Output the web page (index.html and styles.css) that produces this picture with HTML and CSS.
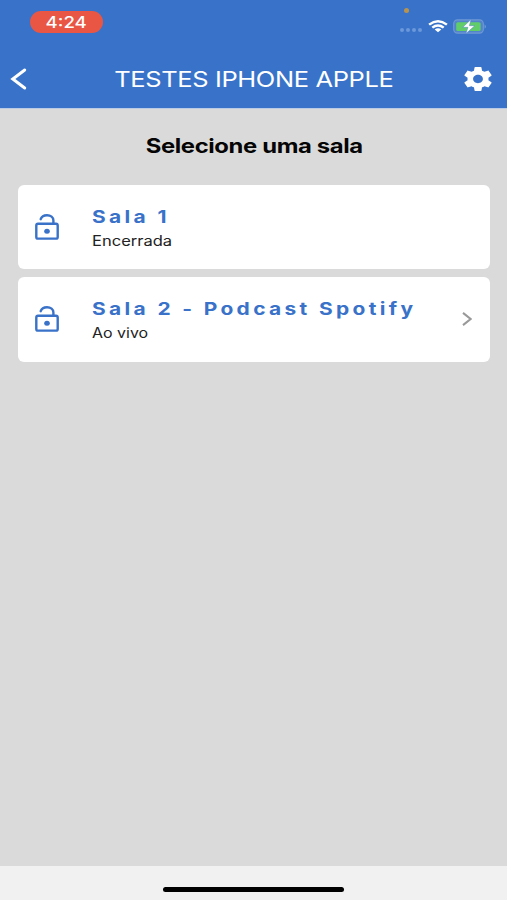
FILE: index.html
```html
<!DOCTYPE html>
<html lang="pt-BR">
<head>
<meta charset="utf-8">
<title>Selecione uma sala</title>
<link rel="stylesheet" href="styles.css">
</head>
<body>
<div class="screen">
  <header class="header">
    <div class="status">
      <div class="time"><span class="wide time-text">4:24</span></div>
      <div class="indicators">
        <i class="privacy-dot"></i>
        <div class="signal"><i></i><i></i><i></i><i></i></div>
        <svg class="wifi" viewBox="0 0 20 14" preserveAspectRatio="none" fill="none" stroke="#fff" stroke-width="2.5"><path d="M1.1 5Q10-2.2 18.9 5M4.3 8.2Q10 3.6 15.7 8.2"/><path d="M6.7 10.1Q10 7.6 13.3 10.1L10 13.2Z" fill="#fff" stroke="none"/></svg>
        <svg class="battery" viewBox="0 0 34 15"><rect x=".7" y=".9" width="29.6" height="13.2" rx="3.8" fill="#5284ca" stroke="#7099d5" stroke-width="1.1"/><rect x="3.2" y="3.2" width="24.4" height="8.8" rx="1.6" fill="#60cd68"/><path d="M31.7 5.2q2 2.3 0 4.6z" fill="#82a9df"/><path d="M18 .5 9.7 8.3h5.2L13 14.6 21.8 6.7h-5.4z" fill="#fff" stroke="#4c82c8" stroke-width=".5"/></svg>
      </div>
    </div>
    <nav class="nav">
      <svg class="back" viewBox="0 0 18 24" fill="none" stroke="#fff" stroke-width="3" stroke-linecap="round" stroke-linejoin="miter"><path d="M14.7 3 2.8 12l11.9 9"/></svg>
      <h1 class="wide title">TESTES IPHONE APPLE</h1>
      <svg class="gear" viewBox="2 2 20 20" preserveAspectRatio="none" fill="#fff"><path d="M19.43 12.98c.04-.32.07-.64.07-.98s-.03-.66-.07-.98l2.11-1.65c.19-.15.24-.42.12-.64l-2-3.46c-.12-.22-.39-.3-.61-.22l-2.49 1c-.52-.4-1.08-.73-1.69-.98l-.38-2.65C14.46 2.18 14.25 2 14 2h-4c-.25 0-.46.18-.49.42l-.38 2.65c-.61.25-1.17.59-1.69.98l-2.49-1c-.23-.09-.49 0-.61.22l-2 3.46c-.13.22-.07.49.12.64l2.11 1.65c-.04.32-.07.65-.07.98s.03.66.07.98l-2.11 1.65c-.19.15-.24.42-.12.64l2 3.46c.12.22.39.3.61.22l2.49-1c.52.4 1.08.73 1.69.98l.38 2.65c.03.24.24.42.49.42h4c.25 0 .46-.18.49-.42l.38-2.65c.61-.25 1.17-.59 1.69-.98l2.49 1c.23.09.49 0 .61-.22l2-3.46c.12-.22.07-.49-.12-.64l-2.11-1.65zM12 15.5c-1.93 0-3.5-1.57-3.5-3.5s1.57-3.5 3.5-3.5 3.5 1.57 3.5 3.5-1.57 3.5-3.5 3.5z"/></svg>
    </nav>
  </header>
  <main class="content">
    <h2 class="wide prompt">Selecione uma sala</h2>
    <div class="rooms">
      <article class="room">
        <svg class="lock" viewBox="0 0 24 26" fill="none" stroke="#3972c8" stroke-width="2.4" stroke-linecap="round"><rect x="1.3" y="9.8" width="21.4" height="14.8" rx="1.7"/><path d="M5.7 5.2C6.5 2.8 9 1.3 12 1.3c3.7 0 6.4 2.2 6.4 5.2v3.3"/><ellipse cx="12" cy="17.2" rx="2.8" ry="2.5" fill="#3972c8" stroke="none"/></svg>
        <div class="info">
          <h3 class="wide name">Sala 1</h3>
          <p class="wide state">Encerrada</p>
        </div>
      </article>
      <article class="room">
        <svg class="lock" viewBox="0 0 24 26" fill="none" stroke="#3972c8" stroke-width="2.4" stroke-linecap="round"><rect x="1.3" y="9.8" width="21.4" height="14.8" rx="1.7"/><path d="M5.7 5.2C6.5 2.8 9 1.3 12 1.3c3.7 0 6.4 2.2 6.4 5.2v3.3"/><ellipse cx="12" cy="17.2" rx="2.8" ry="2.5" fill="#3972c8" stroke="none"/></svg>
        <div class="info">
          <h3 class="wide name">Sala 2 - Podcast Spotify</h3>
          <p class="wide state live">Ao vivo</p>
        </div>
        <svg class="chevron" viewBox="0 0 10 14" fill="none" stroke="#999" stroke-width="2"><path d="M1 .9 8.6 7 1 13.1"/></svg>
      </article>
    </div>
  </main>
  <footer class="footer"><div class="home-bar"></div></footer>
</div>
</body>
</html>
```
FILE: styles.css
```css
* { box-sizing: border-box; }
body, h1, h2, h3, p { margin: 0; }
body { font-family: Inter, "Liberation Sans", sans-serif; }
svg { display: block; flex: none; }
.screen { width: 507px; height: 900px; display: flex; flex-direction: column; background: #dadada; overflow: hidden; }
.wide { white-space: nowrap; width: max-content; transform: scaleX(1.2); transform-origin: left center; }
.header { height: 109px; background: #3873c9; border-bottom: 1px solid #b9cbe5; flex: none; }
.status { height: 50px; display: flex; justify-content: space-between; padding: 11px 20px 0 30px; }
.time { width: 73px; height: 22px; border-radius: 11px; background: #e95643; display: flex; align-items: center; justify-content: center; }
.time-text { color: #fff; font-size: 15.5px; line-height: 22px; font-weight: 500; transform: translateY(1px) scaleX(1.2); transform-origin: center; }
.indicators { position: relative; display: flex; height: 30px; align-items: center; }
.privacy-dot { position: absolute; left: 4px; top: -3px; width: 5px; height: 5px; border-radius: 50%; background: #b8924f; }
.signal { display: flex; gap: 2px; margin: 8px 6px 0 0; }
.signal i { width: 4px; height: 4px; border-radius: 50%; background: #6c98db; }
.wifi { width: 20px; height: 13px; margin-right: 5px; }
.battery { width: 34px; height: 15px; }
.nav { height: 58px; display: grid; grid-template-columns: 28px 1fr 28px; align-items: center; padding: 0 15px 0 10px; }
.back { width: 18px; height: 24px; }
.title { color: #fff; font-size: 22px; font-weight: 400; line-height: 28px; justify-self: center; margin-left: 5px; letter-spacing: -.3px; transform: scaleX(1.156); transform-origin: center; }
.gear { width: 28px; height: 24px; }
.content { flex: 1; padding: 23px 17px 0 18px; }
.prompt { margin: 0 auto; color: #050505; font-size: 20px; line-height: 28px; font-weight: 700; letter-spacing: -.3px; transform: scaleX(1.19); transform-origin: center; }
.rooms { display: flex; flex-direction: column; gap: 8px; margin-top: 25px; }
.room { height: 84.3px; border-radius: 6px; background: #fff; display: flex; align-items: center; padding: 0 18px 0 17px; }
.lock { width: 24px; height: 26px; }
.info { flex: 1; margin-left: 33px; padding-top: 3px; }
.name { color: #3972c8; font-size: 17.5px; line-height: 24px; font-weight: 700; letter-spacing: 2.8px; transform: scaleX(1.196); }
.state { color: #222; font-size: 14px; line-height: 24px; transform: scaleX(1.18); }
.live { transform: scaleX(1.14); }
.chevron { width: 10px; height: 14px; }
.footer { height: 34px; flex: none; background: #f1f1f1; display: flex; justify-content: center; padding-top: 21px; }
.home-bar { width: 181px; height: 5px; border-radius: 3px; background: #000; }
```
